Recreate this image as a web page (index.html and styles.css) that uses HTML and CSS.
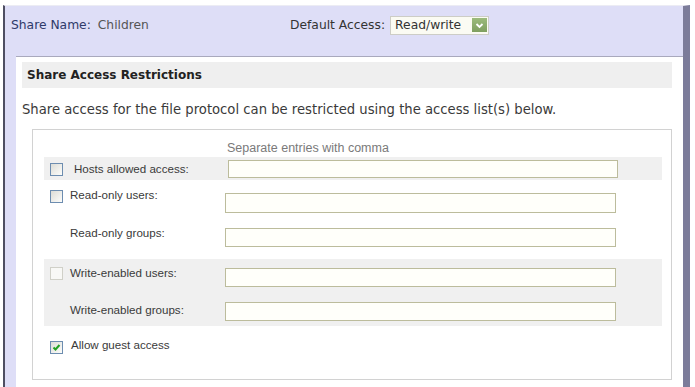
FILE: index.html
```html
<!DOCTYPE html>
<html lang="en">
<head>
  <meta charset="UTF-8">
  <title>Share Access</title>
  <link rel="stylesheet" href="styles.css">
</head>
<body>
  <div class="frame">
    <div class="header">
      <div class="share-name">
        <span class="key">Share Name:</span>
        <span class="value">Children</span>
      </div>
      <div class="default-access">
        <span class="key">Default Access:</span>
        <div class="select">
          <span>Read/write</span>
          <span class="drop">
            <svg width="9" height="9" viewBox="0 0 9 9"><path d="M1.5 3 L4.5 6 L7.5 3" fill="none" stroke="#fff" stroke-width="1.8"/></svg>
          </span>
        </div>
      </div>
    </div>

    <div class="main">
      <div class="panel">
        <div class="section-title">Share Access Restrictions</div>
        <p class="intro">Share access for the file protocol can be restricted using the access list(s) below.</p>

        <div class="box">
          <div class="note">Separate entries with comma</div>

          <div class="field shaded row-hosts">
            <span class="check"></span>
            <span class="label">Hosts allowed access:</span>
            <span class="text"></span>
          </div>

          <div class="field row-ro-users">
            <span class="check"></span>
            <span class="label">Read-only users:</span>
            <span class="text"></span>
          </div>

          <div class="field row-ro-groups">
            <span class="check blank"></span>
            <span class="label">Read-only groups:</span>
            <span class="text"></span>
          </div>

          <div class="shaded group">
            <div class="field row-we-users">
              <span class="check disabled"></span>
              <span class="label">Write-enabled users:</span>
              <span class="text"></span>
            </div>
            <div class="field row-we-groups">
              <span class="check blank"></span>
              <span class="label">Write-enabled groups:</span>
              <span class="text"></span>
            </div>
          </div>

          <div class="field row-guest">
            <span class="check checked">
              <svg width="11" height="11" viewBox="0 0 11 11"><path d="M2.5 5.5 L4.5 7.5 L8.5 3" fill="none" stroke="#21a121" stroke-width="2"/></svg>
            </span>
            <span class="label">Allow guest access</span>
          </div>
        </div>
      </div>
    </div>
  </div>
</body>
</html>
```

FILE: styles.css
```css
* {
  margin: 0;
  padding: 0;
  box-sizing: border-box;
}

body {
  background-color: #ffffff;
  font-family: "DejaVu Sans", Verdana, sans-serif;
  font-size: 11px;
  color: #333;
  overflow: hidden;
}

.frame {
  margin: 5px 0 0 3px;
  width: 687px;
  height: 382px;
  display: flex;
  flex-direction: column;
  background-color: #dedef7;
  border-top: 1px solid #ececf4;
  border-left: 2px solid #4e4e62;
  border-right: 7px solid #7c7c9a;
}

.header {
  height: 50px;
  display: flex;
  align-items: center;
  padding: 0 0 12px 6px;
  font-size: 12.3px;
}

.share-name {
  width: 279px;
}

.share-name .key {
  color: #2f3a6a;
}

.share-name .value {
  color: #555;
  margin-left: 3px;
}

.default-access {
  display: flex;
  align-items: center;
}

.default-access .key {
  color: #333;
}

.select {
  margin-left: 5px;
  width: 99px;
  height: 19px;
  display: flex;
  align-items: center;
  padding-left: 4px;
  border: 1px solid #cdcdc6;
  background-color: #fbfbf3;
  color: #333;
}

.drop {
  margin-left: auto;
  margin-right: 1px;
  width: 15px;
  height: 14px;
  display: flex;
  align-items: center;
  justify-content: center;
  background: linear-gradient(#9cbb7c, #7f9f60);
}

.main {
  flex: 1;
  display: flex;
  padding-left: 11px;
}

.panel {
  flex: 1;
  background-color: #fff;
  border-top: 1px solid #a9a9bd;
  padding: 5px 11px 0 6px;
}

.section-title {
  height: 26px;
  line-height: 26px;
  padding-left: 5px;
  background-color: #efefef;
  font-weight: bold;
  font-size: 12px;
  color: #222;
}

.intro {
  margin: 14px 0 11px;
  line-height: 16px;
  font-size: 13.2px;
  color: #3a3a3a;
}

.box {
  margin-left: 10px;
  height: 251px;
  border: 1px solid #d2d2d2;
  padding: 0 9px 0 11px;
  font-family: "Liberation Sans", Arial, sans-serif;
  font-size: 11.6px;
}

.note {
  padding: 11px 0 0 183px;
  height: 27px;
  line-height: 14px;
  font-size: 12.5px;
  color: #7a7a7a;
}

.shaded {
  background-color: #f0f0f0;
}

.field {
  display: flex;
  align-items: flex-start;
  padding-left: 6px;
}

.check {
  flex: none;
  width: 13px;
  height: 13px;
  margin-right: 7px;
  border: 1px solid #6d8db0;
  background: linear-gradient(135deg, #dcdcd6, #fdfdfb);
  display: flex;
  align-items: center;
  justify-content: center;
}

.check.disabled {
  border-color: #d0d0c8;
  background: #f8f8f6;
}

.check.blank {
  visibility: hidden;
}

.label {
  flex: none;
  width: 155px;
  line-height: 14px;
  color: #3a3a3a;
}

.text {
  flex: none;
  width: 391px;
  height: 19px;
  border: 1px solid #bcbc9c;
  background-color: #fffffa;
}

.row-hosts {
  height: 23px;
}

.row-hosts .check {
  margin-top: 6px;
}

.row-hosts .label {
  margin-top: 5px;
  padding-left: 4px;
  width: 158px;
}

.row-hosts .text {
  margin-top: 3px;
  height: 18px;
  width: 390px;
}

.row-ro-users {
  margin-top: 7px;
  height: 34px;
}

.row-ro-users .check {
  margin-top: 3px;
}

.row-ro-users .label {
  margin-top: 1px;
}

.row-ro-users .text {
  margin-top: 6px;
  height: 20px;
}

.row-ro-groups {
  height: 38px;
}

.row-ro-groups .label {
  margin-top: 5px;
}

.row-ro-groups .text {
  margin-top: 7px;
}

.group {
  height: 67px;
}

.row-we-users {
  height: 35px;
}

.row-we-users .check {
  margin-top: 8px;
}

.row-we-users .label {
  margin-top: 7px;
}

.row-we-users .text {
  margin-top: 9px;
}

.row-we-groups {
  height: 32px;
}

.row-we-groups .label {
  margin-top: 9px;
}

.row-we-groups .text {
  margin-top: 8px;
}

.row-guest .check {
  margin-top: 15px;
  margin-right: 8px;
}

.row-guest .label {
  margin-top: 12px;
}
```
